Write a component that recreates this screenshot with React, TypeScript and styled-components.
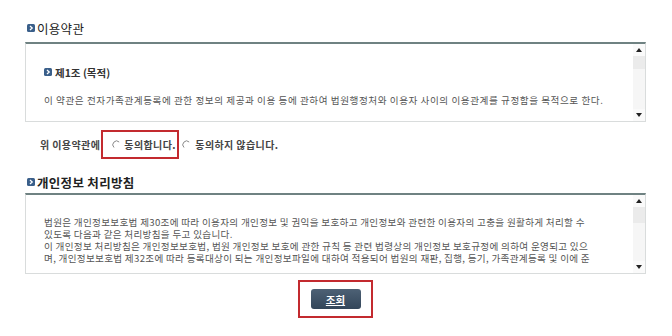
import React from "react";
import styled, { createGlobalStyle } from "styled-components";

const Global = createGlobalStyle`
  html, body { margin: 0; padding: 0; background: #fff; }
  body { font-family: "Noto Sans CJK KR", "Noto Sans", sans-serif; color: #333; }
`;

const Page = styled.div`
  width: 621px;
  padding: 20px 0 0 25px;
  display: flex;
  flex-direction: column;
`;

const Title = styled.div<{ $bold?: boolean; $h: number; $pt?: number }>`
  height: ${(p) => p.$h}px;
  box-sizing: border-box;
  padding-top: ${(p) => p.$pt ?? 0}px;
  display: flex;
  align-items: flex-start;
  gap: 2px;
  padding-left: 2px;
  font-size: 12.5px;
  line-height: 18px;
  font-weight: ${(p) => (p.$bold ? 700 : 400)};
  color: #222;
  letter-spacing: 0.3px;
`;

const BulletWrap = styled.span`
  padding-top: 4px;
  display: flex;
`;

const Box = styled.div<{ $h: number }>`
  height: ${(p) => p.$h}px;
  box-sizing: border-box;
  border: 1px solid #d9dcdc;
  border-top: 2px solid #6f8282;
  display: flex;
`;

const Content = styled.div<{ $pt: number }>`
  flex: 1;
  padding: ${(p) => p.$pt}px 0 0 18px;
  overflow: hidden;
`;

const Article = styled.div`
  display: flex;
  align-items: center;
  gap: 3px;
  font-size: 10.5px;
  font-weight: 700;
  color: #333;
  height: 16px;
  margin-bottom: 14px;
`;

const Body = styled.div<{ $ls?: number }>`
  font-size: 9.6px;
  line-height: 12px;
  color: #555;
  letter-spacing: ${(p) => p.$ls ?? 0.3}px;
  white-space: nowrap;
`;

const Scroll = styled.div`
  width: 12px;
  background: #f6f6f6;
  display: flex;
  flex-direction: column;
  justify-content: space-between;
  align-items: center;
`;

const ScrollTop = styled.div`
  width: 100%;
  display: flex;
  flex-direction: column;
  align-items: center;
`;

const Arrow = styled.div`
  width: 12px;
  height: 12px;
  display: flex;
  align-items: center;
  justify-content: center;
  background: #fafafa;
`;

const Thumb = styled.div<{ $h: number }>`
  width: 12px;
  height: ${(p) => p.$h}px;
  background: #ebebeb;
`;

const AgreeRow = styled.div`
  height: 44px;
  display: flex;
  align-items: center;
  padding-left: 15px;
  font-size: 10px;
  color: #444;
  letter-spacing: 0.4px;
`;

const Lead = styled.span`
  font-weight: 700;
`;

const Highlight = styled.div`
  box-sizing: border-box;
  width: 78px;
  height: 29px;
  border: 2px solid #c32a2f;
  display: flex;
  align-items: center;
  padding-left: 9px;
  gap: 3px;
  margin-left: 1px;
  font-weight: 700;
`;

const Option = styled.div`
  display: flex;
  align-items: center;
  gap: 4px;
  margin-left: 3px;
  font-weight: 700;
`;

const ButtonRow = styled.div`
  display: flex;
  justify-content: center;
  padding-top: 6px;
`;

const ButtonFrame = styled.div`
  box-sizing: border-box;
  width: 75px;
  height: 38px;
  border: 2px solid #c32a2f;
  display: flex;
  align-items: center;
  justify-content: center;
`;

const Button = styled.button`
  width: 50px;
  height: 20px;
  border: none;
  border-radius: 3px;
  background: linear-gradient(#4d6175, #33465a);
  color: #fff;
  font-family: inherit;
  font-size: 10.5px;
  font-weight: 700;
  text-decoration: underline;
  padding: 0;
  display: flex;
  align-items: center;
  justify-content: center;
`;

const Bullet = () => (
  <svg width="8" height="8" viewBox="0 0 8 8" style={{ flex: "none" }}>
    <rect x="0" y="0" width="8" height="8" rx="1.5" fill="#3a5f8a" />
    <path d="M3 2 L5.2 4 L3 6" stroke="#fff" strokeWidth="1.3" fill="none" />
  </svg>
);

const Radio = () => (
  <svg width="9" height="9" viewBox="0 0 9 9">
    <path d="M7.2 2 A3.5 3.5 0 1 0 2 7.5" stroke="#888" strokeWidth="1" fill="none" />
  </svg>
);

const Up = () => (
  <svg width="6" height="4" viewBox="0 0 6 4">
    <path d="M0 4 L3 0 L6 4 Z" fill="#222" />
  </svg>
);
const Down = () => (
  <svg width="6" height="4" viewBox="0 0 6 4">
    <path d="M0 0 L3 4 L6 0 Z" fill="#222" />
  </svg>
);

const Scrollbar = ({ thumb }: { thumb: number }) => (
  <Scroll>
    <ScrollTop>
      <Arrow><Up /></Arrow>
      <Thumb $h={thumb} />
    </ScrollTop>
    <Arrow><Down /></Arrow>
  </Scroll>
);

export default function App() {
  return (
    <>
      <Global />
      <Page>
        <Title $h={22}>
          <BulletWrap><Bullet /></BulletWrap>
          <span>이용약관</span>
        </Title>
        <Box $h={80}>
          <Content $pt={20}>
            <Article><Bullet />제1조 (목적)</Article>
            <Body $ls={0.55}>이 약관은 전자가족관계등록에 관한 정보의 제공과 이용 등에 관하여 법원행정처와 이용자 사이의 이용관계를 규정함을 목적으로 한다.</Body>
          </Content>
          <Scrollbar thumb={13} />
        </Box>
        <AgreeRow>
          <Lead>위 이용약관에</Lead>
          <Highlight><Radio />동의합니다.</Highlight>
          <Option><Radio />동의하지 않습니다.</Option>
        </AgreeRow>
        <Title $bold $h={27} $pt={8}>
          <BulletWrap><Bullet /></BulletWrap>
          <span>개인정보 처리방침</span>
        </Title>
        <Box $h={81}>
          <Content $pt={21}>
            <Body>
              법원은 개인정보보호법 제30조에 따라 이용자의 개인정보 및 권익을 보호하고 개인정보와 관련한 이용자의 고충을 원활하게 처리할 수<br />
              있도록 다음과 같은 처리방침을 두고 있습니다.<br />
              이 개인정보 처리방침은 개인정보보호법, 법원 개인정보 보호에 관한 규칙 등 관련 법령상의 개인정보 보호규정에 의하여 운영되고 있으<br />
              며, 개인정보보호법 제32조에 따라 등록대상이 되는 개인정보파일에 대하여 적용되어 법원의 재판, 집행, 등기, 가족관계등록 및 이에 준
            </Body>
          </Content>
          <Scrollbar thumb={16} />
        </Box>
        <ButtonRow>
          <ButtonFrame>
            <Button>조회</Button>
          </ButtonFrame>
        </ButtonRow>
      </Page>
    </>
  );
}
